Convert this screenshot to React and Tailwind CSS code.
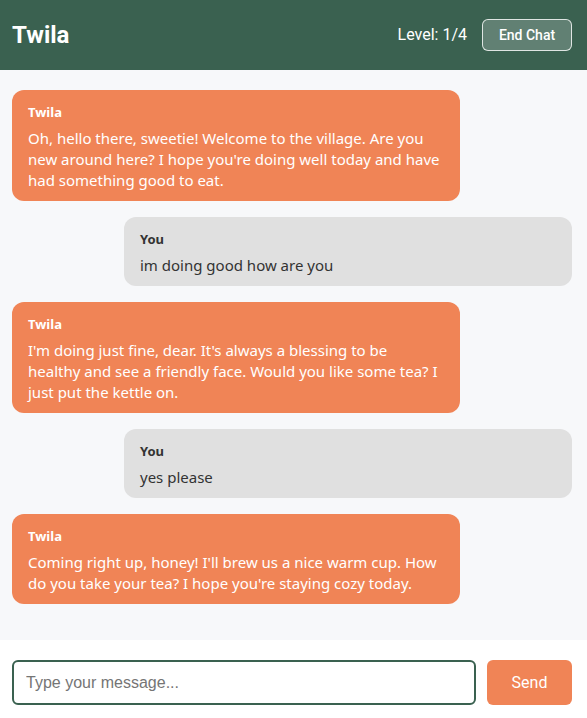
import React from "react";

const messages = [
  {
    from: "Twila",
    lines: [
      "Oh, hello there, sweetie! Welcome to the village. Are you",
      "new around here? I hope you're doing well today and have",
      "had something good to eat.",
    ],
  },
  { from: "You", lines: ["im doing good how are you"] },
  {
    from: "Twila",
    lines: [
      "I'm doing just fine, dear. It's always a blessing to be",
      "healthy and see a friendly face. Would you like some tea? I",
      "just put the kettle on.",
    ],
  },
  { from: "You", lines: ["yes please"] },
  {
    from: "Twila",
    lines: [
      "Coming right up, honey! I'll brew us a nice warm cup. How",
      "do you take your tea? I hope you're staying cozy today.",
    ],
  },
];

export default function App() {
  return (
    <div className="h-[718px] flex flex-col overflow-hidden bg-white">
      <header className="h-[70px] shrink-0 bg-[#3a6150] flex items-center justify-between pl-3 pr-[15px] font-['Roboto',sans-serif] text-white">
        <h1 className="text-[24px] font-bold">Twila</h1>
        <div className="flex items-center gap-[15px]">
          <span className="text-[16px]">Level: 1/4</span>
          <button className="h-8 w-[90px] rounded-md border border-white/80 bg-white/20 text-[14px] font-medium text-white">
            End Chat
          </button>
        </div>
      </header>
      <main className="flex-1 bg-[#f7f8fa] pt-5 pl-3 pr-[15px] flex flex-col gap-4 font-['Noto_Sans',sans-serif]">
        {messages.map((m, i) => {
          const isYou = m.from === "You";
          return (
            <div
              key={i}
              className={
                isYou
                  ? "self-end w-[448px] rounded-xl bg-[#e0e0e0] text-[#333] px-4 pt-[13px] pb-[10px]"
                  : "self-start w-[448px] rounded-xl bg-[#f08456] text-white px-4 pt-[13px] pb-[10px]"
              }
            >
              <div className="text-[13px] font-bold leading-[19px] mb-[6px]">{m.from}</div>
              <div className="text-[15px] leading-[21px]">
                {m.lines.map((l, j) => (
                  <span key={j} className="block whitespace-nowrap">
                    {l}
                  </span>
                ))}
              </div>
            </div>
          );
        })}
      </main>
      <div className="h-[78px] shrink-0 bg-white pt-5 pl-3 pr-[15px] flex items-start gap-[11px]">
        <input
          className="flex-1 h-[45px] rounded-md border-2 border-[#3a6150] px-3 text-[16px] font-['Liberation_Sans',sans-serif] placeholder:text-[#757575] outline-none"
          placeholder="Type your message..."
        />
        <button className="w-[85px] h-[45px] rounded-md bg-[#f08456] text-white text-[16px] font-['Roboto',sans-serif]">
          Send
        </button>
      </div>
    </div>
  );
}
